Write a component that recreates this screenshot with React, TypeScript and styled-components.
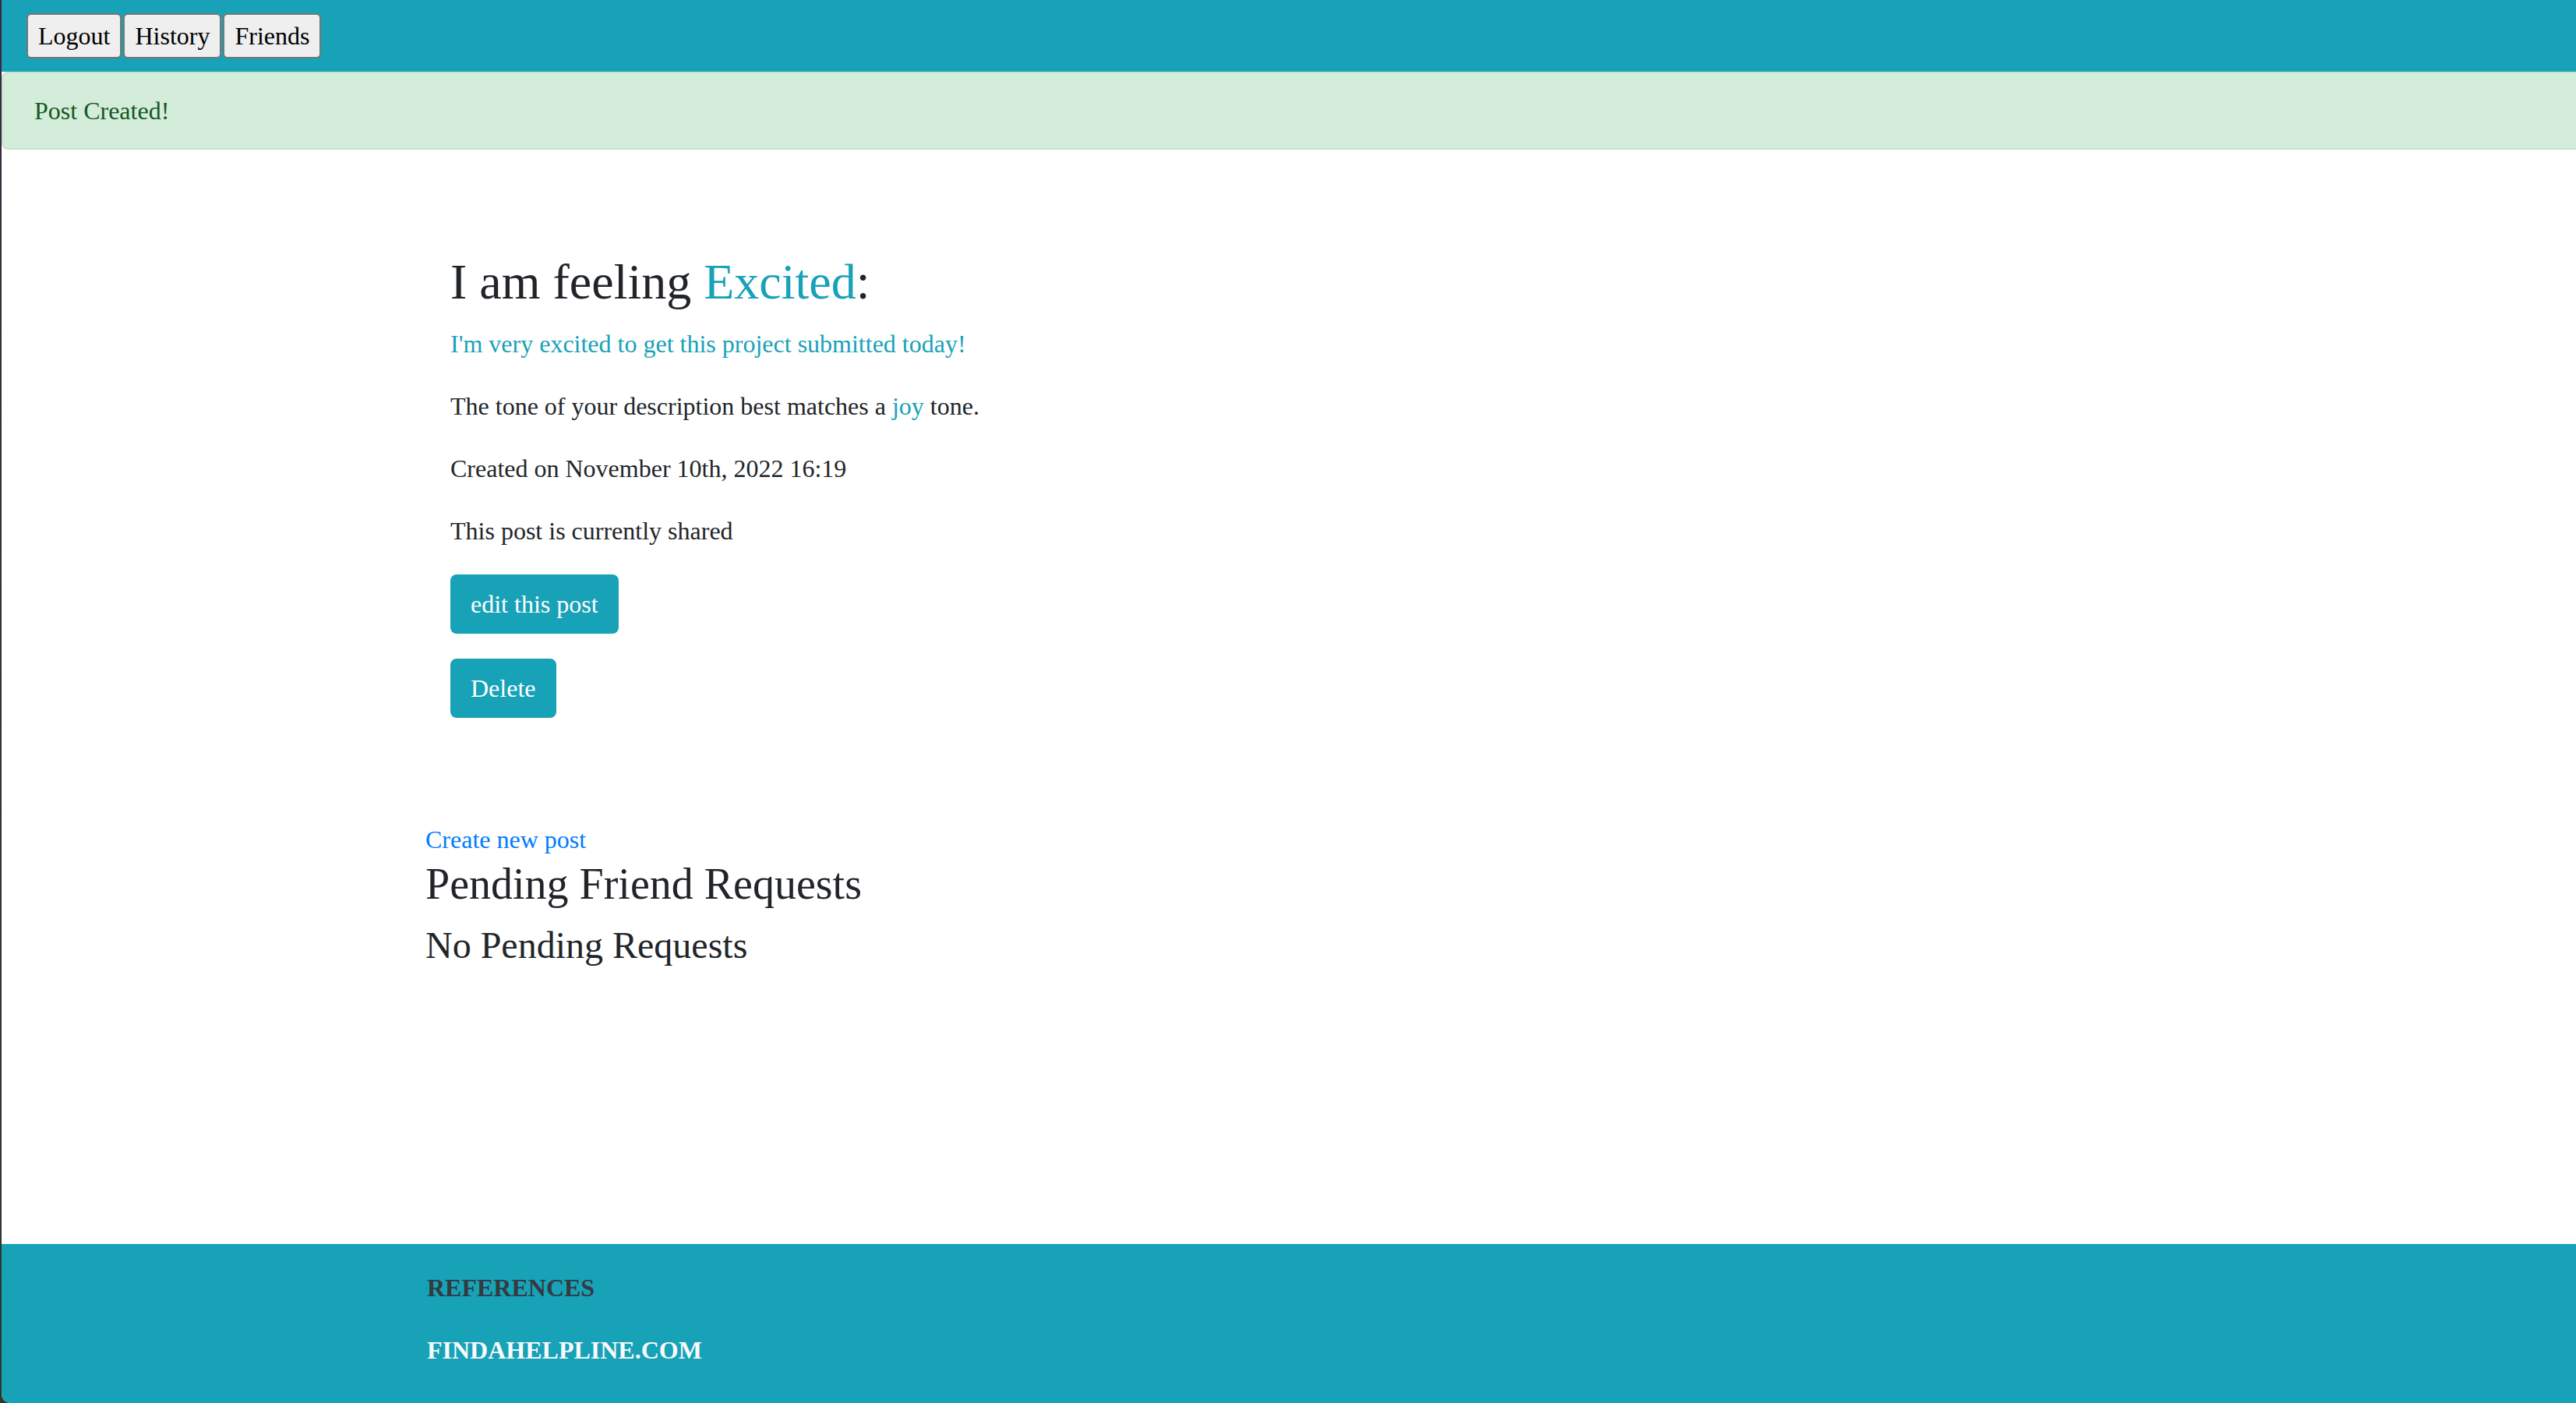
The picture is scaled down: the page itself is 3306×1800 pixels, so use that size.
import React from "react";
import styled, { createGlobalStyle } from "styled-components";

const GlobalStyle = createGlobalStyle`
  html, body {
    margin: 0;
    padding: 0;
  }
  body {
    background: #2b2430;
    font-family: "Liberation Serif", "Times New Roman", serif;
  }
  * { box-sizing: border-box; }
`;

const Frame = styled.div`
  display: flex;
  min-height: 1800px;
  padding-left: 2px;
  background: linear-gradient(180deg, #3a2a40 0%, #2a3a2a 100%);
`;

const Page = styled.div`
  flex: 1;
  display: flex;
  flex-direction: column;
  min-width: 0;
  background: #ffffff;
  color: #212529;
  font-size: 32px;
  line-height: 1.5;
  border-bottom-left-radius: 12px;
  overflow: hidden;
`;

const NavBar = styled.nav`
  display: flex;
  align-items: flex-start;
  gap: 2px;
  height: 92px;
  padding: 17px 0 0 32px;
  background: #17a2b8;
`;

const NavButton = styled.button`
  height: 58px;
  padding: 0 13px;
  font-family: inherit;
  font-size: 32px;
  line-height: 1.15;
  color: #000000;
  background: #efefef;
  border: 2px solid #767676;
  border-radius: 6px;
`;

const Alert = styled.div`
  margin: 0 -16px 32px 0;
  padding: 24px 40px;
  background: #d4edda;
  border: 2px solid #c3e6cb;
  border-radius: 8px;
  color: #155724;
`;

const Main = styled.main`
  flex: 1;
`;

const Container = styled.div`
  max-width: 2280px;
  margin: 0 auto;
  padding: 0 32px;
`;

const PostCard = styled.section`
  padding: 100px 32px 132px;
`;

const Heading = styled.h2`
  margin: 0 0 16px;
  font-size: 64px;
  font-weight: 400;
  line-height: 1.2;
`;

const Accent = styled.span`
  color: #17a2b8;
`;

const Text = styled.p<{ $accent?: boolean }>`
  margin: 0 0 32px;
  color: ${(p) => (p.$accent ? "#17a2b8" : "inherit")};
`;

const Actions = styled.div`
  display: flex;
  flex-direction: column;
  align-items: flex-start;
  gap: 32px;
`;

const ActionButton = styled.button`
  padding: 12px 24px;
  font-family: inherit;
  font-size: 32px;
  line-height: 1.5;
  color: #ffffff;
  background: #17a2b8;
  border: 2px solid #17a2b8;
  border-radius: 8px;
`;

const CreateLink = styled.a`
  display: block;
  color: #007bff;
  text-decoration: none;
`;

const SectionTitle = styled.h3`
  margin: 0 0 16px;
  font-size: 56px;
  font-weight: 400;
  line-height: 1.2;
`;

const SubTitle = styled.h4`
  margin: 0 0 16px;
  font-size: 48px;
  font-weight: 400;
  line-height: 1.2;
`;

const Footer = styled.footer`
  height: 204px;
  padding: 32px 0;
  background: #17a2b8;
`;

const FooterInner = styled(Container)`
  padding-left: 34px;
`;

const FooterHeading = styled.p`
  margin: 0 0 32px;
  font-weight: 700;
  color: #343a40;
`;

const FooterLink = styled.a`
  font-weight: 700;
  color: #f8f9fa;
  text-decoration: none;
`;

export default function App() {
  return (
    <>
      <GlobalStyle />
      <Frame>
        <Page>
          <NavBar>
            <NavButton>Logout</NavButton>
            <NavButton>History</NavButton>
            <NavButton>Friends</NavButton>
          </NavBar>
          <Alert>Post Created!</Alert>
          <Main>
            <Container>
              <PostCard>
                <Heading>
                  I am feeling <Accent>Excited</Accent>:
                </Heading>
                <Text $accent>I'm very excited to get this project submitted today!</Text>
                <Text>
                  The tone of your description best matches a <Accent>joy</Accent> tone.
                </Text>
                <Text>Created on November 10th, 2022 16:19</Text>
                <Text>This post is currently shared</Text>
                <Actions>
                  <ActionButton>edit this post</ActionButton>
                  <ActionButton>Delete</ActionButton>
                </Actions>
              </PostCard>
              <CreateLink href="#">Create new post</CreateLink>
              <SectionTitle>Pending Friend Requests</SectionTitle>
              <SubTitle>No Pending Requests</SubTitle>
            </Container>
          </Main>
          <Footer>
            <FooterInner>
              <FooterHeading>REFERENCES</FooterHeading>
              <FooterLink href="#">FINDAHELPLINE.COM</FooterLink>
            </FooterInner>
          </Footer>
        </Page>
      </Frame>
    </>
  );
}
